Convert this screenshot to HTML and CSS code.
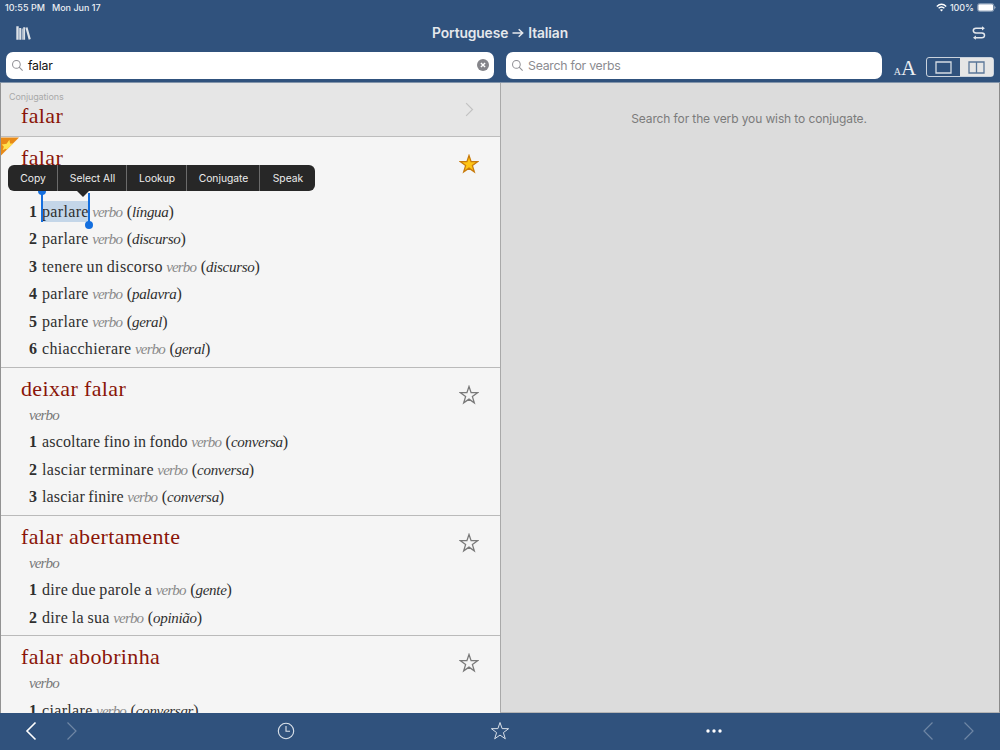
FILE: index.html
```html
<!DOCTYPE html>
<html lang="en">
<head>
<meta charset="utf-8">
<title>Portuguese → Italian</title>
<link rel="stylesheet" href="styles.css">
</head>
<body>
<svg class="defs" width="0" height="0">
  <symbol id="star" viewBox="0 0 20 20"><path d="M10 1.5 12.1 7.6 18.6 7.7 13.4 11.6 15.3 17.8 10 14.1 4.7 17.8 6.6 11.6 1.4 7.7 7.9 7.6Z"/></symbol>
  <symbol id="glass" viewBox="0 0 12 12"><circle cx="4.8" cy="4.8" r="4.2"/><path d="M7.8 7.8 11.6 11.6"/></symbol>
  <symbol id="next" viewBox="0 0 12 20"><path d="M1.5 1.5 10 10 1.5 18.5"/></symbol>
  <symbol id="prev" viewBox="0 0 12 20"><path d="M10.5 1.5 2 10 10.5 18.5"/></symbol>
</svg>
<div class="app">
  <header class="top">
    <div class="status">
      <span class="time">10:55 PM</span><span class="date">Mon Jun 17</span>
      <span class="grow"></span>
      <svg class="wifi" width="11" height="9" viewBox="0 0 11 9"><path d="M.8 3.4Q5.5-.9 10.2 3.4M2.6 5.3Q5.5 2.7 8.4 5.3"/><path class="dot" d="M3.9 6.8Q5.5 5.5 7.1 6.8L5.5 8.5Z"/></svg>
      <span class="percent">100%</span>
      <svg class="battery" width="19" height="9" viewBox="0 0 19 9"><rect class="shell" x=".5" y=".5" width="16.4" height="8" rx="2.2"/><rect x="1.3" y="1.3" width="14.8" height="6.4" rx="1.3"/><path d="M17.6 3Q19.2 4.5 17.6 6Z"/></svg>
    </div>
    <div class="titlebar">
      <svg class="books" width="16" height="15" viewBox="0 0 16 15"><path d="M.3.3H2.7V13.8H.3ZM3.2 2H5.1V13.8H3.2ZM5.7 2.5H6.7V13.8H5.7ZM7.2 1.2H9.1V13.8H7.2ZM9.4 1.8 11.5 1.2 14.8 13 12.7 13.7Z"/></svg>
      <h1 class="title">Portuguese <svg width="12" height="10" viewBox="0 0 12 10"><path d="M.5 5H10.5M6.7 1.2 10.7 5 6.7 8.8"/></svg> Italian</h1>
      <svg class="swap" width="14" height="14" viewBox="0 0 14 14"><path d="M10.5 2.2H4Q1.3 2.2 1.3 4.5T4 6.9H9.9Q12.5 6.9 12.5 9.3T9.9 11.7H3.4"/><path class="tip" d="M10 .2 12.9 2.2 10 4.4ZM3.9 9.6 1 11.7 3.9 13.8Z"/></svg>
    </div>
    <div class="tools">
      <div class="field field-left"><svg class="glass"><use href="#glass"/></svg><span class="typed">falar</span>
        <svg class="clear" width="12" height="12" viewBox="0 0 12 12"><circle cx="6" cy="6" r="6"/><path d="M3.9 3.9 8.1 8.1M8.1 3.9 3.9 8.1"/></svg></div>
      <div class="field field-right"><svg class="glass"><use href="#glass"/></svg><span class="hint">Search for verbs</span></div>
      <div class="size"><span class="small">A</span><span class="large">A</span></div>
      <div class="segments">
        <span class="segment"><svg width="17" height="13" viewBox="0 0 17 13"><path d="M1 1H16V12H1Z"/></svg></span>
        <span class="segment on"><svg width="17" height="13" viewBox="0 0 17 13"><path d="M1 1H16V12H1ZM8.5 1V12"/></svg></span>
      </div>
    </div>
  </header>

  <main class="panes">
    <section class="results">
      <div class="conjugations">
        <div><div class="label">Conjugations</div><h2 class="word">falar</h2></div>
        <svg class="more"><use href="#next"/></svg>
      </div>

      <article class="entry">
        <svg class="corner" width="19" height="19" viewBox="0 0 19 19"><path class="fold" d="M0 .5H18L0 18.5Z"/><path class="mark" d="M8.4 2.8 9.1 6.4 12.1 6.4 7.4 11.1 5.8 12.6 4.6 11.7 1.6 13.2 2.9 9.8 .7 7.4 4.3 6.9 5.6 6.7Z"/></svg>
        <h2 class="word">falar</h2>
        <svg class="fav filled"><use href="#star"/></svg>
        <p class="kind"></p>
        <ol class="senses">
          <li><b>1</b><span class="t selected">parlare<i class="handle start"></i><i class="handle end"></i></span><em>verbo</em><span class="ctx">(<i>língua</i>)</span></li>
          <li><b>2</b><span class="t">parlare</span><em>verbo</em><span class="ctx">(<i>discurso</i>)</span></li>
          <li><b>3</b><span class="t">tenere un discorso</span><em>verbo</em><span class="ctx">(<i>discurso</i>)</span></li>
          <li><b>4</b><span class="t">parlare</span><em>verbo</em><span class="ctx">(<i>palavra</i>)</span></li>
          <li><b>5</b><span class="t">parlare</span><em>verbo</em><span class="ctx">(<i>geral</i>)</span></li>
          <li><b>6</b><span class="t">chiacchierare</span><em>verbo</em><span class="ctx">(<i>geral</i>)</span></li>
        </ol>
        <div class="menu"><span class="copy">Copy</span><span class="select">Select All</span><span class="lookup">Lookup</span><span class="conj">Conjugate</span><span class="speak">Speak</span></div>
      </article>

      <article class="entry">
        <h2 class="word">deixar falar</h2>
        <svg class="fav"><use href="#star"/></svg>
        <p class="kind">verbo</p>
        <ol class="senses">
          <li><b>1</b><span class="t tight">ascoltare fino in fondo</span><em>verbo</em><span class="ctx">(<i>conversa</i>)</span></li>
          <li><b>2</b><span class="t">lasciar terminare</span><em>verbo</em><span class="ctx">(<i>conversa</i>)</span></li>
          <li><b>3</b><span class="t tight">lasciar finire</span><em>verbo</em><span class="ctx">(<i>conversa</i>)</span></li>
        </ol>
      </article>

      <article class="entry">
        <h2 class="word">falar abertamente</h2>
        <svg class="fav"><use href="#star"/></svg>
        <p class="kind">verbo</p>
        <ol class="senses">
          <li><b>1</b><span class="t">dire due parole a</span><em>verbo</em><span class="ctx">(<i>gente</i>)</span></li>
          <li><b>2</b><span class="t">dire la sua</span><em>verbo</em><span class="ctx">(<i>opinião</i>)</span></li>
        </ol>
      </article>

      <article class="entry">
        <h2 class="word">falar abobrinha</h2>
        <svg class="fav"><use href="#star"/></svg>
        <p class="kind">verbo</p>
        <ol class="senses">
          <li><b>1</b><span class="t">ciarlare</span><em>verbo</em><span class="ctx">(<i>conversar</i>)</span></li>
        </ol>
      </article>
    </section>
    <section class="conjugate"><p class="empty">Search for the verb you wish to conjugate.</p></section>
  </main>

  <footer class="bottom">
    <div class="nav nav-left"><svg class="arrow"><use href="#prev"/></svg><svg class="arrow off"><use href="#next"/></svg></div>
    <svg class="clock" width="18" height="18" viewBox="0 0 18 18"><circle cx="9" cy="9" r="7.7"/><path d="M9 4V9.3H13"/></svg>
    <svg class="mainstar"><use href="#star"/></svg>
    <svg class="dots" width="16" height="4" viewBox="0 0 16 4"><circle cx="2" cy="2" r="1.7"/><circle cx="8" cy="2" r="1.7"/><circle cx="14" cy="2" r="1.7"/></svg>
    <div class="nav nav-right"><svg class="arrow off"><use href="#prev"/></svg><svg class="arrow off"><use href="#next"/></svg></div>
  </footer>
</div>
</body>
</html>
```

FILE: styles.css
```css
* { box-sizing: border-box; }
body { margin: 0; font-family: Inter, Roboto, "Liberation Sans", sans-serif; }
svg { display: block; flex: none; fill: none; }
h1, h2, p, ol { margin: 0; padding: 0; font-weight: 400; }
.defs { position: absolute; }
.app { width: 1000px; height: 750px; display: flex; flex-direction: column; overflow: hidden; background: #30527d; }

.top { height: 82px; flex: none; display: flex; flex-direction: column; color: #e9edf2; }
.status { height: 15px; display: flex; align-items: center; padding: 0 4px 0 5px; font-size: 9px; font-weight: 500; white-space: nowrap; }
.time { width: 47px; letter-spacing: .02px; }
.date { letter-spacing: -.02px; }
.grow { flex: 1; }
.wifi { stroke: #fff; stroke-width: 1.4; }
.wifi .dot { fill: #fff; stroke: none; }
.percent { margin: 0 3px 0 3px; letter-spacing: -.05px; }
.battery { fill: #fff; }
.battery .shell { fill: none; stroke: #91a4bc; stroke-width: .8; }

.titlebar { height: 36px; display: flex; align-items: center; justify-content: space-between; padding: 0 14px 0 16px; }
.books { fill: #dce1e7; }
.title { display: flex; align-items: center; gap: 4px; font-size: 13.8px; font-weight: 600; letter-spacing: -.1px; color: #e5e8ec; margin-right: 4px; }
.title svg { stroke: currentColor; stroke-width: 1.5; }
.swap { stroke: #e4e8ed; stroke-width: 1.5; }
.swap .tip { fill: #e4e8ed; stroke: none; }

.tools { height: 28px; margin-top: 1px; padding: 0 6px; display: flex; align-items: flex-start; }
.field { height: 27px; border-radius: 7px; background: #fff; display: flex; align-items: center; padding: 0 6px 1px; font-size: 12.3px; letter-spacing: -.25px; }
.field-left { width: 488px; margin-right: 12px; }
.field-right { width: 376px; }
.glass { width: 11px; height: 11px; stroke: #8e8e93; stroke-width: 1.1; margin-right: 5px; }
.typed { flex: 1; color: #111; }
.hint { color: #8b8b90; }
.clear { fill: #85858a; stroke: #fff; margin-right: -1px; }
.clear circle { stroke: none; }
.clear path { stroke-width: 1.4; }
.size { width: 44px; height: 27px; display: flex; align-items: baseline; justify-content: center; font-family: "Liberation Serif", serif; color: #eceff3; padding-left: 2px; }
.small { font-size: 10px; }
.large { font-size: 21px; line-height: 32px; }
.segments { width: 68px; height: 20px; margin-top: 5px; display: flex; border: 1px solid #c9d2dd; border-radius: 3px; }
.segment { flex: 1; display: flex; align-items: center; justify-content: center; }
.segment svg { stroke: #d5dce4; stroke-width: 1.3; }
.segment.on { background: #e6e6e6; }
.segment.on svg { stroke: #5b7799; }

.panes { height: 631px; flex: none; display: flex; border-top: 1px solid #8294aa; }
.results { width: 500px; flex: none; overflow: hidden; background: #f5f5f5; border-left: 1px solid #929292; }
.conjugate { flex: 1; background: #dcdcdc; border-left: 1px solid #a9a9a9; border-right: 1px solid #8b8b8b; border-bottom: 1px solid #b5b5b5; }
.empty { margin-top: 28px; padding-right: 2px; text-align: center; font-size: 12px; line-height: 15px; letter-spacing: -.11px; color: #7b7b7b; }
.conjugations { height: 54px; background: #e6e6e6; border-bottom: 1px solid #bdbdbd; display: flex; justify-content: space-between; padding: 8px 26px 0 8px; }
.conjugations .word { padding-left: 12px; line-height: 28px; margin-top: -1px; }
.label { font-size: 9px; line-height: 12px; color: #a9a9a9; letter-spacing: -.12px; }
.more { width: 9px; height: 15px; margin-top: 11px; stroke: #c2c2c2; stroke-width: 1.6; }

.entry { position: relative; padding-bottom: 4px; border-bottom: 1px solid #bababa; font-family: "Liberation Serif", serif; }
.word { font-family: "Liberation Serif", serif; font-size: 22px; line-height: 33px; color: #8a1509; letter-spacing: .36px; white-space: nowrap; }
.entry .word { height: 33px; padding: 4px 0 0 20px; line-height: 34px; }
.fav { position: absolute; left: 458px; top: 17px; width: 20px; height: 20px; stroke: #7a7a7a; stroke-width: 1.3; }
.fav.filled { fill: #ffc514; stroke: #c87b0c; }
.kind { height: 27.5px; padding: 1px 0 0 28px; font-size: 15px; font-style: italic; line-height: 27.5px; letter-spacing: -.85px; color: #777; }
.senses { list-style: none; }
.senses li { height: 27.5px; line-height: 28.5px; padding-left: 28px; display: flex; align-items: baseline; font-size: 16px; color: #2f2f2f; white-space: nowrap; }
.senses b { width: 13px; flex: none; }
.t { letter-spacing: .33px; word-spacing: -.8px; }
.t.tight { letter-spacing: .16px; }
.senses em { margin: 0 4.5px 0 3.5px; font-size: 15px; letter-spacing: -.85px; color: #888; }
.ctx { font-size: 16px; }
.ctx i { font-size: 15px; letter-spacing: -.3px; }
.selected { position: relative; line-height: 21px; background: #c4d6e8; }
.handle { position: absolute; width: 2px; background: #146fdf; }
.handle::after { content: ""; position: absolute; left: -3px; width: 8px; height: 8px; border-radius: 50%; background: #146fdf; }
.start { left: -1px; top: -11px; height: 32px; }
.start::after { top: -3px; }
.end { right: -1px; top: -8px; height: 31px; }
.end::after { bottom: -5px; }
.corner { position: absolute; left: 0; top: 0; }
.fold { fill: #e88a17; }
.mark { fill: #ffe14d; }

.menu { position: absolute; left: 7px; top: 28px; width: 307px; height: 26px; border-radius: 6px; background: #272727; display: flex; font-family: Inter, Roboto, sans-serif; font-size: 10.3px; color: #ededed; }
.menu span { display: flex; align-items: center; justify-content: center; border-right: 1px solid #6b6b6b; padding-left: 1px; }
.menu::after { content: ""; position: absolute; left: 69px; top: 26px; border: 6.5px solid transparent; border-top-color: #272727; border-bottom: 0; }
.copy { width: 50px; }
.select { width: 69px; }
.lookup { width: 60px; }
.conj { width: 73px; }
.menu .speak { flex: 1; border: 0; }

.bottom { height: 36px; flex: none; display: grid; grid-template-columns: 272px 28px 400px 28px 272px; align-items: center; justify-items: center; }
.nav { display: flex; width: 100%; padding: 0 25px; }
.nav-right { justify-content: flex-end; }
.arrow { width: 12px; height: 20px; stroke: #fff; stroke-width: 1.6; }
.arrow.off { stroke: #6f87a5; stroke-width: 1.2; }
.nav-left { gap: 29px; }
.nav-right { gap: 29px; }
.clock { stroke: #dce3eb; stroke-width: 1.1; }
.mainstar { width: 20px; height: 20px; stroke: #d9e0e9; stroke-width: 1; }
.dots { fill: #fff; }
```
